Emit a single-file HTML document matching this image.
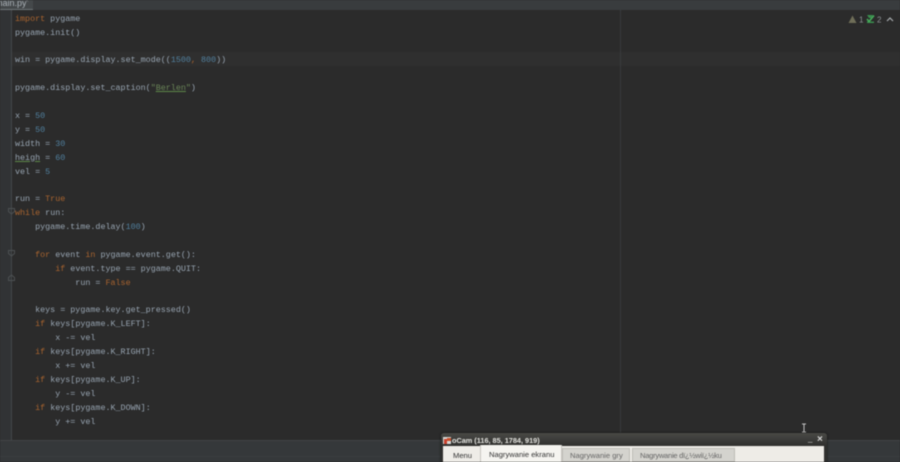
<!DOCTYPE html>
<html lang="en"><head><meta charset="utf-8"><title>main.py</title>
<style>
html,body{margin:0;padding:0;width:900px;height:462px;overflow:hidden;background:#2b2b2b}
#s{position:absolute;left:0;top:0;width:900px;height:462px;overflow:hidden;filter:blur(.5px)}
.a{position:absolute}
.l{position:absolute;left:15px;height:14px;font:8.38px/14px "Liberation Mono",monospace;color:#98a5b2;white-space:pre;margin-top:.5px}
.k{color:#a9642f}.n{color:#51809f}.g{color:#6a8558}
.u{text-decoration:underline;text-decoration-color:#5f8a4a}
.o{position:absolute;font:7.6px/13px "Liberation Sans",sans-serif;white-space:nowrap}
</style></head><body><div id="s">
<div class="a" style="left:0;top:0;width:900px;height:10px;background:#393c3e"></div>
<div class="a" style="left:0;top:0;width:33px;height:9px;background:#44484a;border-bottom:1px solid #6f7478"></div>
<div class="a" style="left:-5px;top:-4px;font:9px/14px 'Liberation Sans',sans-serif;color:#a9b0b6">main.py</div>
<div class="a" style="left:25px;top:-3px;font:7px/10px 'Liberation Sans',sans-serif;color:#6c6f72">×</div>
<div class="a" style="left:0;top:10px;width:11px;height:430px;background:#313335"></div>
<div class="a" style="left:11px;top:10px;width:1px;height:430px;background:#44484a"></div>
<div class="a" style="left:12px;top:52px;width:888px;height:14px;background:#2f2f2f"></div>
<div class="a" style="left:620px;top:10px;width:1px;height:430px;background:#393b3d"></div>
<div class="a" style="left:0;top:440px;width:900px;height:22px;background:#35383a"></div>
<div class="a" style="left:0;top:440px;width:900px;height:1px;background:#414446"></div>
<div class="a" style="left:0;top:456px;width:900px;height:1px;background:#3b3e40"></div>

<svg class="a" style="left:8px;top:205px" width="8" height="90" viewBox="0 0 8 90"><g fill="none" stroke="#4d5153" stroke-width="1"><path d="M.5 3.500h6v3l-3 2.500-3-2.500z"/><path d="M.5 45.500h6v3l-3 2.500-3-2.500z"/><path d="M3.500 70l3 2.500v3h-6v-3z"/></g></svg>
<svg class="a" style="left:848px;top:14px" width="36" height="11" viewBox="0 0 36 11"><path d="M4.500 1.500L8.500 9h-8z" fill="#6f6e58"/><text x="11" y="8.500" font-family="Liberation Sans" font-size="8" fill="#8f9497">1</text><path d="M19 1h6l-2 3h-2zM19 7.500h7v1.500h-7z" fill="#3b8f4f"/><path d="M19 5l2 2.500 5-6" fill="none" stroke="#47ad5b" stroke-width="1.600"/><text x="29" y="8.500" font-family="Liberation Sans" font-size="8" fill="#8f9497">2</text></svg>
<svg class="a" style="left:885px;top:16px" width="10" height="6"><path d="M2 5l3-3 3 3" fill="none" stroke="#a9adb0" stroke-width="1.200"/></svg>

<div class="l" style="top:11px"><span class="k">import</span> pygame</div>
<div class="l" style="top:25px">pygame.init()</div>
<div class="l" style="top:52px">win = pygame.display.set_mode((<span class="n">1500</span><span class="k">,</span> <span class="n">800</span>))</div>
<div class="l" style="top:80px">pygame.display.set_caption(<span class="g">"<span class="u">Berlen</span>"</span>)</div>
<div class="l" style="top:108px">x = <span class="n">50</span></div>
<div class="l" style="top:122px">y = <span class="n">50</span></div>
<div class="l" style="top:136px">width = <span class="n">30</span></div>
<div class="l" style="top:150px"><span class="u">heigh</span> = <span class="n">60</span></div>
<div class="l" style="top:164px">vel = <span class="n">5</span></div>
<div class="l" style="top:191px">run = <span class="k">True</span></div>
<div class="l" style="top:205px"><span class="k">while</span> run:</div>
<div class="l" style="top:219px">    pygame.time.delay(<span class="n">100</span>)</div>
<div class="l" style="top:247px">    <span class="k">for</span> event <span class="k">in</span> pygame.event.get():</div>
<div class="l" style="top:261px">        <span class="k">if</span> event.type == pygame.QUIT:</div>
<div class="l" style="top:275px">            run = <span class="k">False</span></div>
<div class="l" style="top:302px">    keys = pygame.key.get_pressed()</div>
<div class="l" style="top:316px">    <span class="k">if</span> keys[pygame.K_LEFT]:</div>
<div class="l" style="top:330px">        x -= vel</div>
<div class="l" style="top:344px">    <span class="k">if</span> keys[pygame.K_RIGHT]:</div>
<div class="l" style="top:358px">        x += vel</div>
<div class="l" style="top:372px">    <span class="k">if</span> keys[pygame.K_UP]:</div>
<div class="l" style="top:386px">        y -= vel</div>
<div class="l" style="top:400px">    <span class="k">if</span> keys[pygame.K_DOWN]:</div>
<div class="l" style="top:414px">        y += vel</div>

<svg class="a" style="left:801px;top:423px" width="7" height="10"><path d="M1 1h4M3 1v8M1 9h4" fill="none" stroke="#c4c4c4" stroke-width="1"/></svg>

<div class="a" style="left:441px;top:433px;width:386px;height:29px;background:linear-gradient(#4a4a46,#2f2f2d 13px);border-radius:3px 3px 0 0;box-shadow:0 0 2px #111"></div>
<div class="a" style="left:443px;top:437px;width:8px;height:7px;background:#d8d8d4"></div>
<div class="a" style="left:444px;top:439px;width:3px;height:5px;background:#c9402c"></div>
<div class="a" style="left:447px;top:438px;width:4px;height:3px;background:#c9502c"></div>
<div class="o" style="left:452px;top:434px;font-weight:bold;font-size:7.3px;color:#e4e4e0">oCam (116, 85, 1784, 919)</div>
<div class="a" style="left:808px;top:433px;font:8px/11px 'Liberation Sans',sans-serif;color:#c8c8c8">_</div>
<div class="a" style="left:817px;top:434px;font:bold 10px/11px 'Liberation Sans',sans-serif;color:#d5d5d5">×</div>
<div class="a" style="left:443px;top:446px;width:381px;height:16px;background:#eeece7"></div>
<div class="a" style="left:480px;top:445px;width:82px;height:17px;background:#f5f4f0;border-left:1px solid #c8c6c0;border-right:1px solid #c8c6c0;box-sizing:border-box"></div>
<div class="a" style="left:562px;top:448px;width:68px;height:14px;background:#d4d3ce;border:1px solid #bdbcb6;box-sizing:border-box"></div>
<div class="a" style="left:632px;top:448px;width:103px;height:14px;background:#d4d3ce;border:1px solid #bdbcb6;box-sizing:border-box"></div>
<div class="o" style="left:453px;top:449px;color:#333">Menu</div>
<div class="o" style="left:489px;top:448px;color:#333">Nagrywanie ekranu</div>
<div class="o" style="left:570px;top:449px;color:#666">Nagrywanie gry</div>
<div class="o" style="left:640px;top:449px;color:#666;letter-spacing:-.28px">Nagrywanie dï¿½wiï¿½ku</div>
</div></body></html>
